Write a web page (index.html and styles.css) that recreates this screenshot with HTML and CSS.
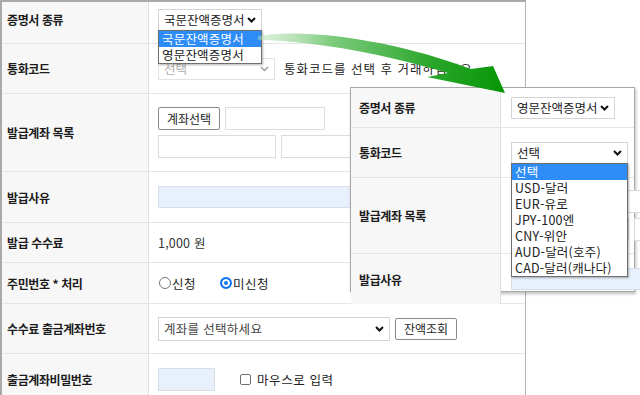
FILE: index.html
```html
<!DOCTYPE html>
<html lang="ko">
<head>
    <meta charset="utf-8">
    <title>잔액증명서 발급</title>
    <link rel="stylesheet" href="styles.css">
</head>
<body>
<div class="stage">
    <div class="form main-form">
        <div class="row r1">
            <div class="label">증명서 종류</div>
            <div class="value">
                <div class="select-wrap">
                    <div class="select sel-type">국문잔액증명서
                        <svg class="chev" viewBox="0 0 9 6"><path d="M1 1l3.5 3.5L8 1"/></svg>
                    </div>
                    <ul class="listbox list-type">
                        <li class="on">국문잔액증명서</li>
                        <li>영문잔액증명서</li>
                    </ul>
                </div>
            </div>
        </div>
        <div class="row r2">
            <div class="label">통화코드</div>
            <div class="value">
                <div class="select sel-cur disabled">선택
                    <svg class="chev" viewBox="0 0 9 6"><path d="M1 1l3.5 3.5L8 1"/></svg>
                </div>
                <span class="notice">통화코드를 선택 후 거래하십시오</span>
            </div>
        </div>
        <div class="row r3">
            <div class="label">발급계좌 목록</div>
            <div class="value stack">
                <div class="line">
                    <button class="btn">계좌선택</button>
                    <span class="input w100"></span>
                </div>
                <div class="line">
                    <span class="input w118"></span>
                    <span class="input w118"></span>
                </div>
            </div>
        </div>
        <div class="row r4">
            <div class="label">발급사유</div>
            <div class="value">
                <span class="input blue w370"></span>
            </div>
        </div>
        <div class="row r5">
            <div class="label">발급 수수료</div>
            <div class="value">1,000 원</div>
        </div>
        <div class="row r6">
            <div class="label">주민번호 * 처리</div>
            <div class="value">
                <span class="radio"></span><span class="opt">신청</span>
                <span class="radio checked"></span><span class="opt">미신청</span>
            </div>
        </div>
        <div class="row r7">
            <div class="label">수수료 출금계좌번호</div>
            <div class="value">
                <div class="select sel-acct">계좌를 선택하세요
                    <svg class="chev" viewBox="0 0 9 6"><path d="M1 1l3.5 3.5L8 1"/></svg>
                </div>
                <button class="btn btn-balance">잔액조회</button>
            </div>
        </div>
        <div class="row r8">
            <div class="label">출금계좌비밀번호</div>
            <div class="value">
                <span class="input blue w57"></span>
                <span class="checkbox"></span>
                <span class="check-label">마우스로 입력</span>
            </div>
        </div>
    </div>

    <div class="inset">
        <div class="form inset-form">
            <div class="row i1">
                <div class="label">증명서 종류</div>
                <div class="value">
                    <div class="select sel-type">영문잔액증명서
                        <svg class="chev" viewBox="0 0 9 6"><path d="M1 1l3.5 3.5L8 1"/></svg>
                    </div>
                </div>
            </div>
            <div class="row i2">
                <div class="label">통화코드</div>
                <div class="value">
                    <div class="select-wrap">
                        <div class="select sel-cur">선택
                            <svg class="chev" viewBox="0 0 9 6"><path d="M1 1l3.5 3.5L8 1"/></svg>
                        </div>
                        <ul class="listbox list-cur">
                            <li class="on">선택</li>
                            <li>USD-달러</li>
                            <li>EUR-유로</li>
                            <li>JPY-100엔</li>
                            <li>CNY-위안</li>
                            <li>AUD-달러(호주)</li>
                            <li>CAD-달러(캐나다)</li>
                        </ul>
                    </div>
                </div>
            </div>
            <div class="row i3">
                <div class="label">발급계좌 목록</div>
                <div class="value stack">
                    <div class="line">
                        <button class="btn">계좌선택</button>
                        <span class="input w100"></span>
                    </div>
                    <div class="line">
                        <span class="input w118"></span>
                        <span class="input w118"></span>
                    </div>
                </div>
            </div>
            <div class="row i4">
                <div class="label">발급사유</div>
                <div class="value">
                    <span class="input blue w370"></span>
                </div>
            </div>
        </div>
    </div>

    <svg class="arrow" viewBox="0 0 640 395" width="640" height="395">
        <defs>
            <linearGradient id="arrowFill" gradientUnits="userSpaceOnUse" x1="258" y1="38" x2="505" y2="80">
                <stop offset="0" stop-color="#b5e2b5" stop-opacity="0.45"/>
                <stop offset="0.3" stop-color="#6cc46c" stop-opacity="0.9"/>
                <stop offset="0.7" stop-color="#2aa62a"/>
                <stop offset="1" stop-color="#079607"/>
            </linearGradient>
        </defs>
        <path fill="url(#arrowFill)" d="M258 36C312 27 402 43 471 69L493 66L505 93L427 77L448 73C390 56 320 41 258 40Z"/>
    </svg>
</div>
</body>
</html>
```

FILE: styles.css
```css
body {
    margin: 0;
    background: #ffffff;
    color: #222222;
    font-family: "Noto Sans CJK KR", "Noto Sans", sans-serif;
    font-size: 12px;
}

.stage {
    position: relative;
    width: 640px;
    height: 395px;
    overflow: hidden;
}

ul {
    margin: 0;
    padding: 0;
    list-style: none;
}

/* form table */
.main-form {
    width: 523px;
    border-top: 2px solid #a9a9a9;
    border-left: 2px solid #a9a9a9;
    border-right: 1px solid #b4b4b4;
}

.row {
    display: flex;
    border-bottom: 1px solid #e6e6e6;
}

.label {
    width: 147px;
    flex: none;
    box-sizing: border-box;
    background: #f7f7f7;
    border-right: 1px solid #e0e0e0;
    padding-left: 5px;
    display: flex;
    align-items: center;
    font-weight: bold;
    letter-spacing: -0.4px;
    color: #1c1c1c;
}

.value {
    flex: 1;
    display: flex;
    align-items: center;
    padding-left: 9px;
    color: #333333;
    font-size: 12.5px;
    letter-spacing: 0.2px;
}

.r1 { height: 41px; }
.r1 .label, .r1 .value { padding-bottom: 6px; }
.r2 { height: 49px; }
.r3 { height: 77px; }
.r4 { height: 50px; }
.r5 { height: 39px; }
.r6 { height: 40px; }
.r7 { height: 49px; }
.r8 { height: 50px; }

.stack {
    flex-direction: column;
    align-items: flex-start;
    justify-content: center;
    gap: 5px;
}

.line {
    display: flex;
    gap: 5px;
}

/* controls */
.select-wrap {
    position: relative;
}

.select {
    height: 22px;
    box-sizing: border-box;
    border: 1px solid #d4d4d4;
    background: #ffffff;
    padding: 0 5px 0 5px;
    display: flex;
    align-items: center;
    justify-content: space-between;
    color: #222222;
    font-size: 12.5px;
    letter-spacing: 0;
}

.chev {
    width: 9px;
    height: 6px;
    fill: none;
    stroke: #111111;
    stroke-width: 2;
}

.sel-type { width: 104px; }
.sel-cur { width: 117px; }
.sel-acct { width: 232px; height: 24px; color: #444444; letter-spacing: 0.3px; }

.select.disabled {
    color: #b0b0b0;
    border-color: #e2e2e2;
}

.select.disabled .chev {
    stroke: #9a9a9a;
    stroke-width: 1.3;
}

.notice {
    margin-left: 9px;
    color: #222222;
    letter-spacing: 1px;
}

.listbox {
    position: absolute;
    left: 0;
    top: 21px;
    z-index: 3;
    box-sizing: border-box;
    border: 1px solid #6f6f6f;
    background: #ffffff;
    box-shadow: 1px 1px 2px rgba(0, 0, 0, 0.3);
}

.listbox li {
    height: 16px;
    line-height: 16px;
    padding-left: 3px;
    font-size: 12.5px;
    color: #222222;
    white-space: nowrap;
}

.listbox li.on {
    background: #2d8cf6;
    color: #ffffff;
}

.list-type { width: 104px; }
.list-cur { width: 117px; }

.btn {
    height: 23px;
    width: 62px;
    padding: 0;
    border: 1px solid #8a8a8a;
    border-radius: 2px;
    background: #ffffff;
    font-family: inherit;
    font-size: 12px;
    color: #222222;
}

.btn-balance {
    margin-left: 5px;
    height: 22px;
}

.input {
    display: block;
    height: 23px;
    box-sizing: border-box;
    border: 1px solid #dcdcdc;
    background: #ffffff;
}

.input.blue {
    background: #e7f0fb;
    border-color: #d9dfe6;
}

.w57 { width: 57px; }
.w100 { width: 100px; }
.w118 { width: 118px; }
.w370 { width: 370px; height: 22px; }

.radio {
    width: 12px;
    height: 12px;
    box-sizing: border-box;
    border: 1px solid #767676;
    border-radius: 50%;
    margin-left: 1px;
}

.radio.checked {
    margin-left: 24px;
    border: 2px solid #0a74f0;
    background: #0a74f0;
    box-shadow: inset 0 0 0 2px #ffffff;
}

.opt {
    margin-left: 1px;
    color: #222222;
    letter-spacing: 0.5px;
}

.checkbox {
    width: 11px;
    height: 11px;
    box-sizing: border-box;
    border: 1px solid #707070;
    border-radius: 2px;
    margin-left: 25px;
}

.check-label {
    margin-left: 6px;
    color: #222222;
    letter-spacing: 0.6px;
}

/* inset screenshot of the same form */
.inset {
    position: absolute;
    left: 350px;
    top: 87px;
    width: 285px;
    height: 205px;
    box-sizing: border-box;
    border: 1px solid #a8a8a8;
    background: #ffffff;
    box-shadow: 1px 2px 3px rgba(0, 0, 0, 0.25);
    z-index: 2;
}

.inset-form .label {
    width: 150px;
    padding-left: 8px;
}

.inset-form .value {
    padding-left: 10px;
}

.i1 { height: 39px; }
.i2 { height: 49px; }
.i3 { height: 75px; }
.i4 { height: 50px; border-bottom: none; }

.arrow {
    position: absolute;
    left: 0;
    top: 0;
    z-index: 4;
    pointer-events: none;
}
```
